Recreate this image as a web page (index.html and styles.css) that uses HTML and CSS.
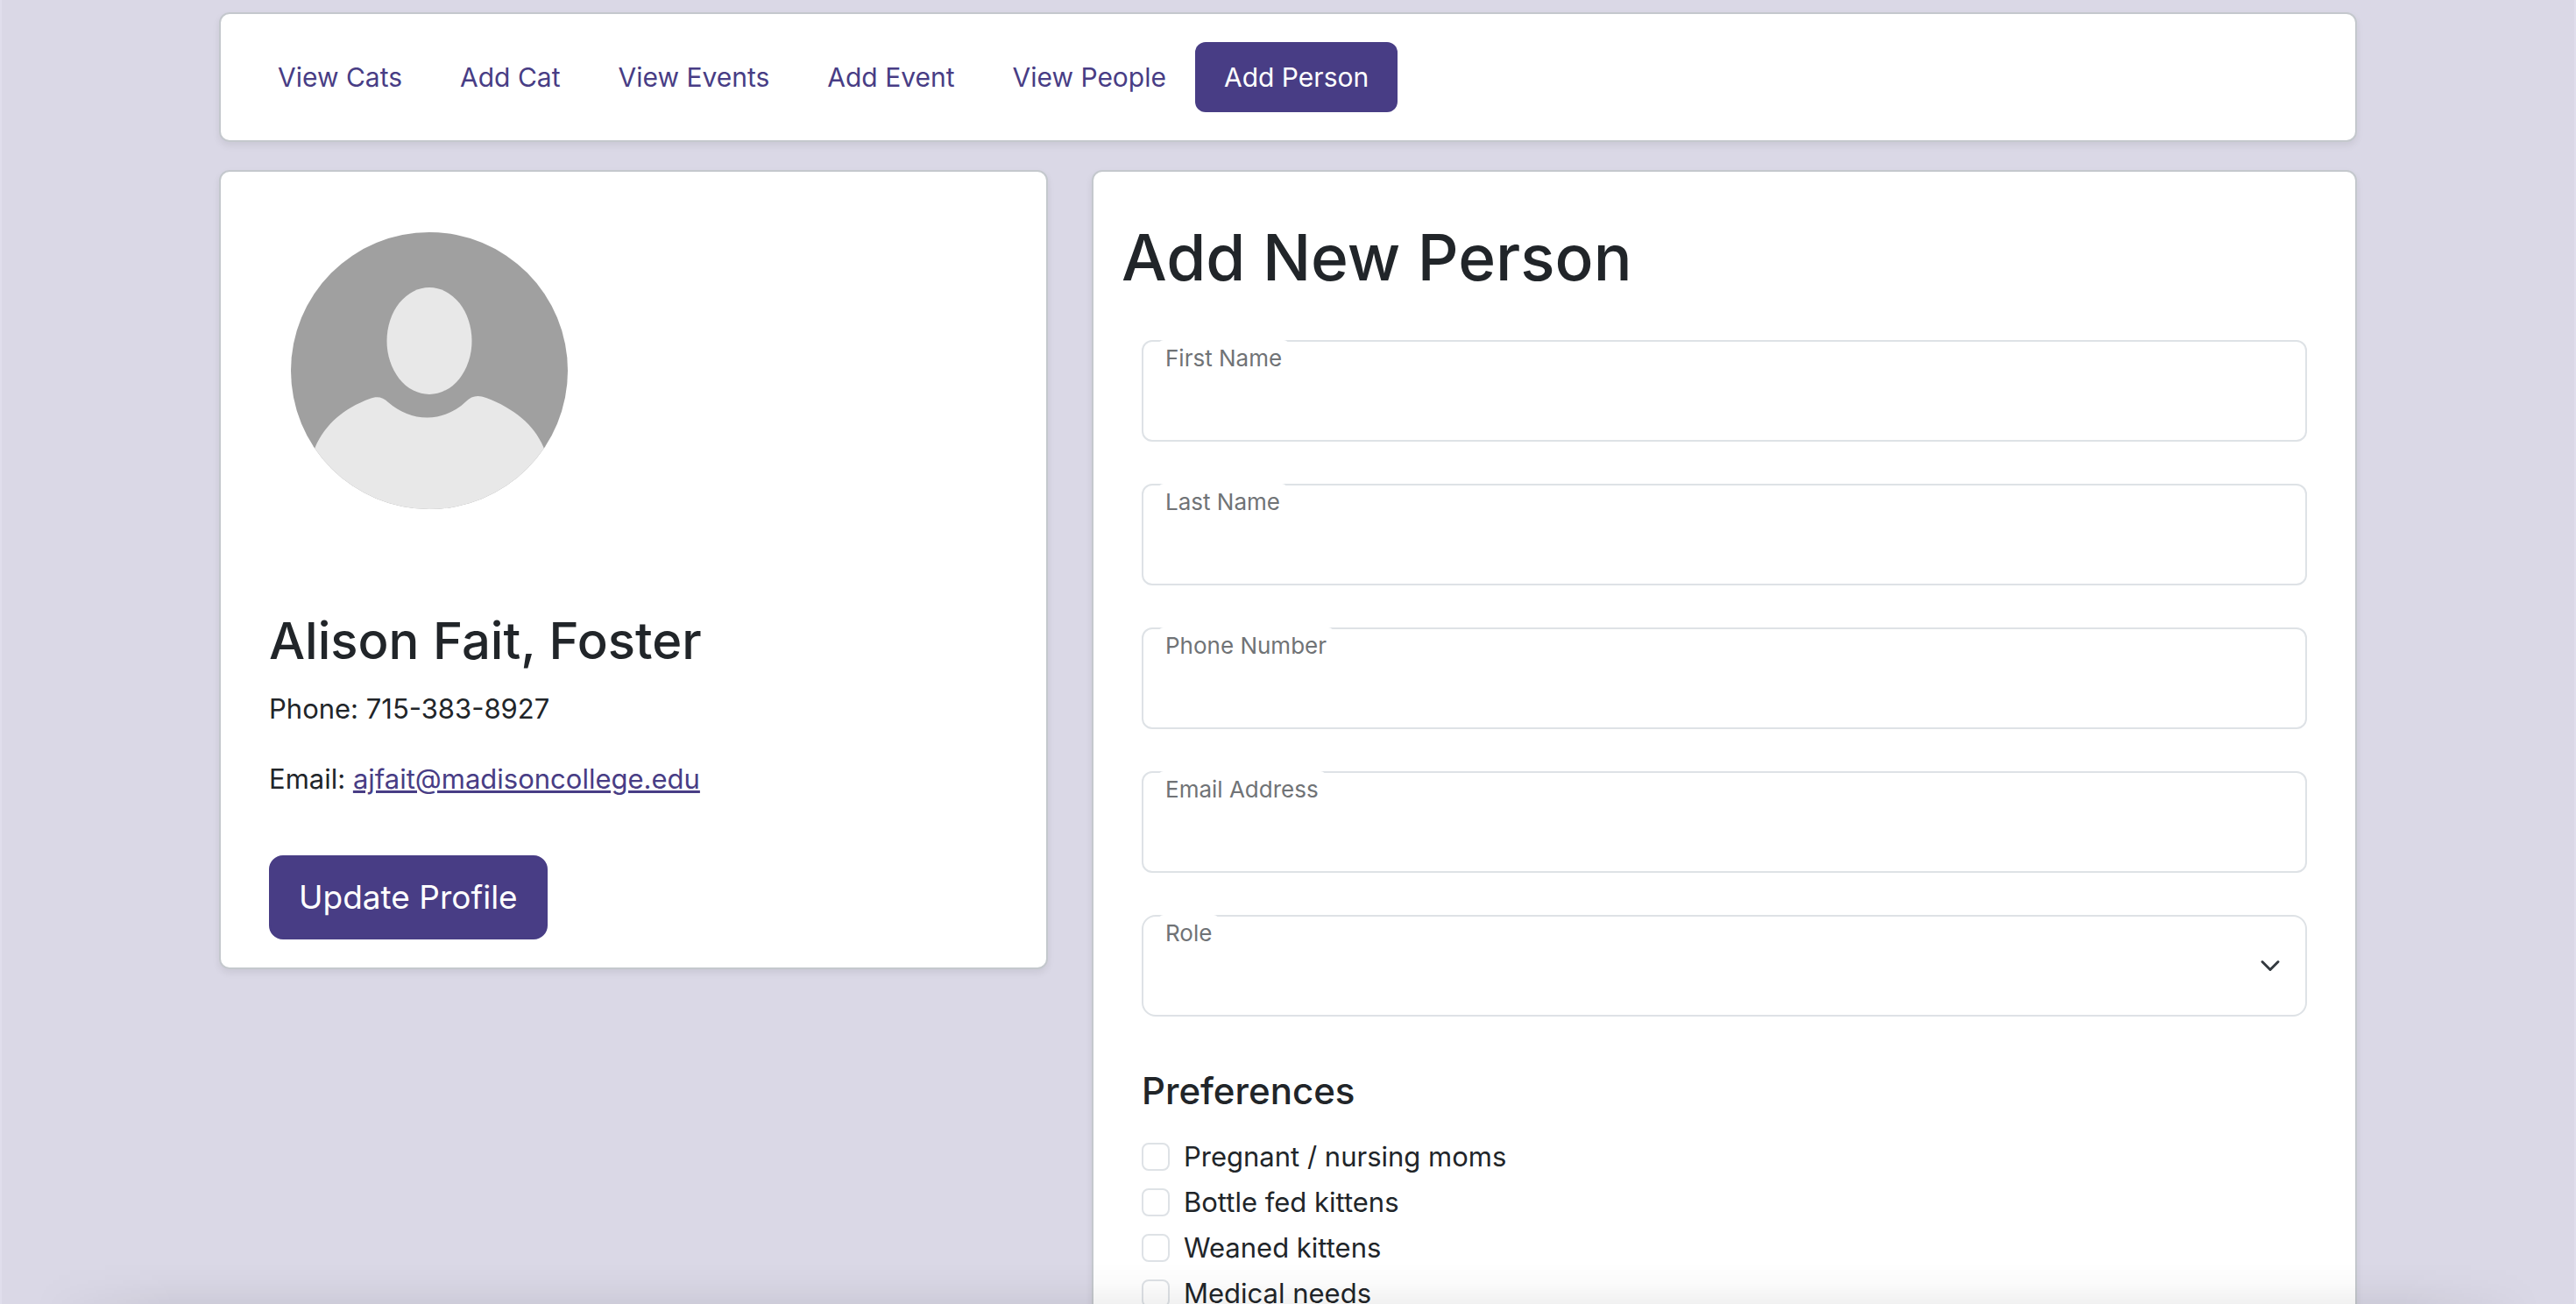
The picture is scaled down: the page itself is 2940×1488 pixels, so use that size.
FILE: index.html
```html
<!DOCTYPE html>
<html lang="en">
<head>
<meta charset="utf-8">
<meta name="viewport" content="width=device-width, initial-scale=1">
<title>Add New Person</title>
<link rel="stylesheet" href="styles.css">
</head>
<body>
<div class="container">
  <nav class="card nav" aria-label="Main">
    <a class="nav-link" href="#cats">View Cats</a>
    <a class="nav-link" href="#add-cat">Add Cat</a>
    <a class="nav-link" href="#events">View Events</a>
    <a class="nav-link" href="#add-event">Add Event</a>
    <a class="nav-link" href="#people">View People</a>
    <a class="nav-link active" href="#add-person" aria-current="page">Add Person</a>
  </nav>
  <div class="columns">
    <aside class="card profile">
      <svg class="avatar" viewBox="0 0 316 316" role="img" aria-label="Profile picture">
        <clipPath id="avatar-clip"><circle cx="158" cy="158" r="158"/></clipPath>
        <g clip-path="url(#avatar-clip)">
          <rect width="316" height="316" fill="#a0a0a0"/>
          <ellipse cx="158" cy="124" rx="48.5" ry="61" fill="#e8e8e8"/>
          <path d="M27 247C38 220 60 201 90 190C98 187 105 188 111 194C137 217 174 218 200 193C206 187 213 185 223 189C255 201 279 221 289 247L316 316H0Z" fill="#e8e8e8"/>
        </g>
      </svg>
      <h2 class="profile-name">Alison Fait, Foster</h2>
      <p class="profile-line">Phone: 715-383-8927</p>
      <p class="profile-line">Email: <a class="link" href="mailto:ajfait@madisoncollege.edu">ajfait@madisoncollege.edu</a></p>
      <button class="button" type="button">Update Profile</button>
    </aside>
    <main class="card main">
      <h1 class="title">Add New Person</h1>
      <form class="form">
        <div class="field">
          <input class="control" id="first-name" type="text">
          <label class="field-label" for="first-name">First Name</label>
        </div>
        <div class="field">
          <input class="control" id="last-name" type="text">
          <label class="field-label" for="last-name">Last Name</label>
        </div>
        <div class="field">
          <input class="control" id="phone" type="tel">
          <label class="field-label" for="phone">Phone Number</label>
        </div>
        <div class="field">
          <input class="control" id="email" type="email">
          <label class="field-label" for="email">Email Address</label>
        </div>
        <div class="field">
          <select class="control select" id="role"><option value=""></option></select>
          <label class="field-label" for="role">Role</label>
          <svg class="chevron" viewBox="0 0 16 16" aria-hidden="true"><path d="m2 5 6 6 6-6" fill="none" stroke="#343a40" stroke-width="2" stroke-linecap="round" stroke-linejoin="round"/></svg>
        </div>
        <h3 class="subtitle">Preferences</h3>
        <div class="check"><input class="check-box" type="checkbox" id="pregnant"><label for="pregnant">Pregnant / nursing moms</label></div>
        <div class="check"><input class="check-box" type="checkbox" id="bottle"><label for="bottle">Bottle fed kittens</label></div>
        <div class="check"><input class="check-box" type="checkbox" id="weaned"><label for="weaned">Weaned kittens</label></div>
        <div class="check"><input class="check-box" type="checkbox" id="medical"><label for="medical">Medical needs</label></div>
      </form>
    </main>
  </div>
</div>
</body>
</html>
```
FILE: styles.css
```css
* {
  box-sizing: border-box;
}

html {
  background: #dad8e6;
}

body {
  height: 100vh;
  margin: 0;
  padding: 14px 24px 0;
  overflow: hidden;
  border: solid #e0deec;
  border-width: 0 2px;
  color: #212529;
  font: 400 31px/48px Inter, "Liberation Sans", sans-serif;
}

/* shade along the bottom edge of the window */
body::after {
  content: "";
  position: fixed;
  inset: auto 0 0;
  height: 48px;
  background: linear-gradient(rgba(0, 0, 0, 0), rgba(0, 0, 0, 0.015) 50%, rgba(0, 0, 0, 0.055));
  mask-image: linear-gradient(90deg, transparent 40px, #000 200px, #000 calc(100% - 200px), transparent calc(100% - 40px));
  pointer-events: none;
}

.container {
  display: grid;
  gap: 32px;
  max-width: 2440px;
  margin: 0 auto;
}

.columns {
  display: grid;
  grid-template-columns: calc(40% - 30px) 1fr;
  gap: 50px;
  align-items: start;
}

.card {
  padding: 32px;
  background: #fff;
  border: 2px solid #c4c8cd;
  border-radius: 12px;
  box-shadow: 0 4px 8px rgba(0, 0, 0, 0.075);
}

.nav {
  display: flex;
}

.nav-link {
  padding: 16px 33px;
  border-radius: 12px;
  color: #483d85;
  font-size: 30px;
  text-decoration: none;
}

.nav-link.active {
  background: #483d85;
  color: #fff;
}

.profile {
  padding: 69px 56px 32px 55px;
}

.avatar {
  display: block;
  width: 316px;
  height: 316px;
  margin: 0 0 112px 25px;
}

.profile-name {
  margin: 0 0 16px;
  font-size: 58px;
  line-height: 76px;
  font-weight: 500;
}

.profile-line {
  margin: 0 0 32px;
}

.link {
  color: #483d85;
}

.button {
  display: block;
  margin-top: 63px;
  padding: 16px 32px;
  border: 2px solid #483d85;
  border-radius: 16px;
  background: #483d85;
  color: #fff;
  font: inherit;
  font-size: 37px;
  line-height: 60px;
}

.main {
  padding-top: 50px;
}

.title {
  margin: 0 0 46px;
  font-size: 73px;
  line-height: 96px;
  font-weight: 500;
}

.form {
  padding: 0 23px;
}

.field {
  position: relative;
  margin-bottom: 48px;
}

.control {
  display: block;
  width: 100%;
  height: 116px;
  padding: 48px 24px 16px;
  border: 2px solid #dee2e6;
  border-radius: 12px;
  background: #fff;
  color: inherit;
  font: inherit;
}

.select {
  appearance: none;
  border-radius: 16px;
}

.field-label {
  position: absolute;
  top: 0;
  left: 19px;
  padding: 0 8px;
  border-radius: 6px;
  background: #fff;
  color: #707376;
  font-size: 26px;
  line-height: 42px;
}

.chevron {
  position: absolute;
  top: 46px;
  right: 30px;
  width: 24px;
  height: 24px;
  pointer-events: none;
}

.subtitle {
  margin: 56px 0 22px;
  font-size: 42px;
  line-height: 58px;
  font-weight: 500;
}

.check {
  display: flex;
  align-items: center;
  gap: 16px;
  margin-bottom: 4px;
}

.check-box {
  appearance: none;
  width: 32px;
  height: 32px;
  margin: 0;
  border: 2px solid #dee2e6;
  border-radius: 8px;
  background: #fff;
}
```
